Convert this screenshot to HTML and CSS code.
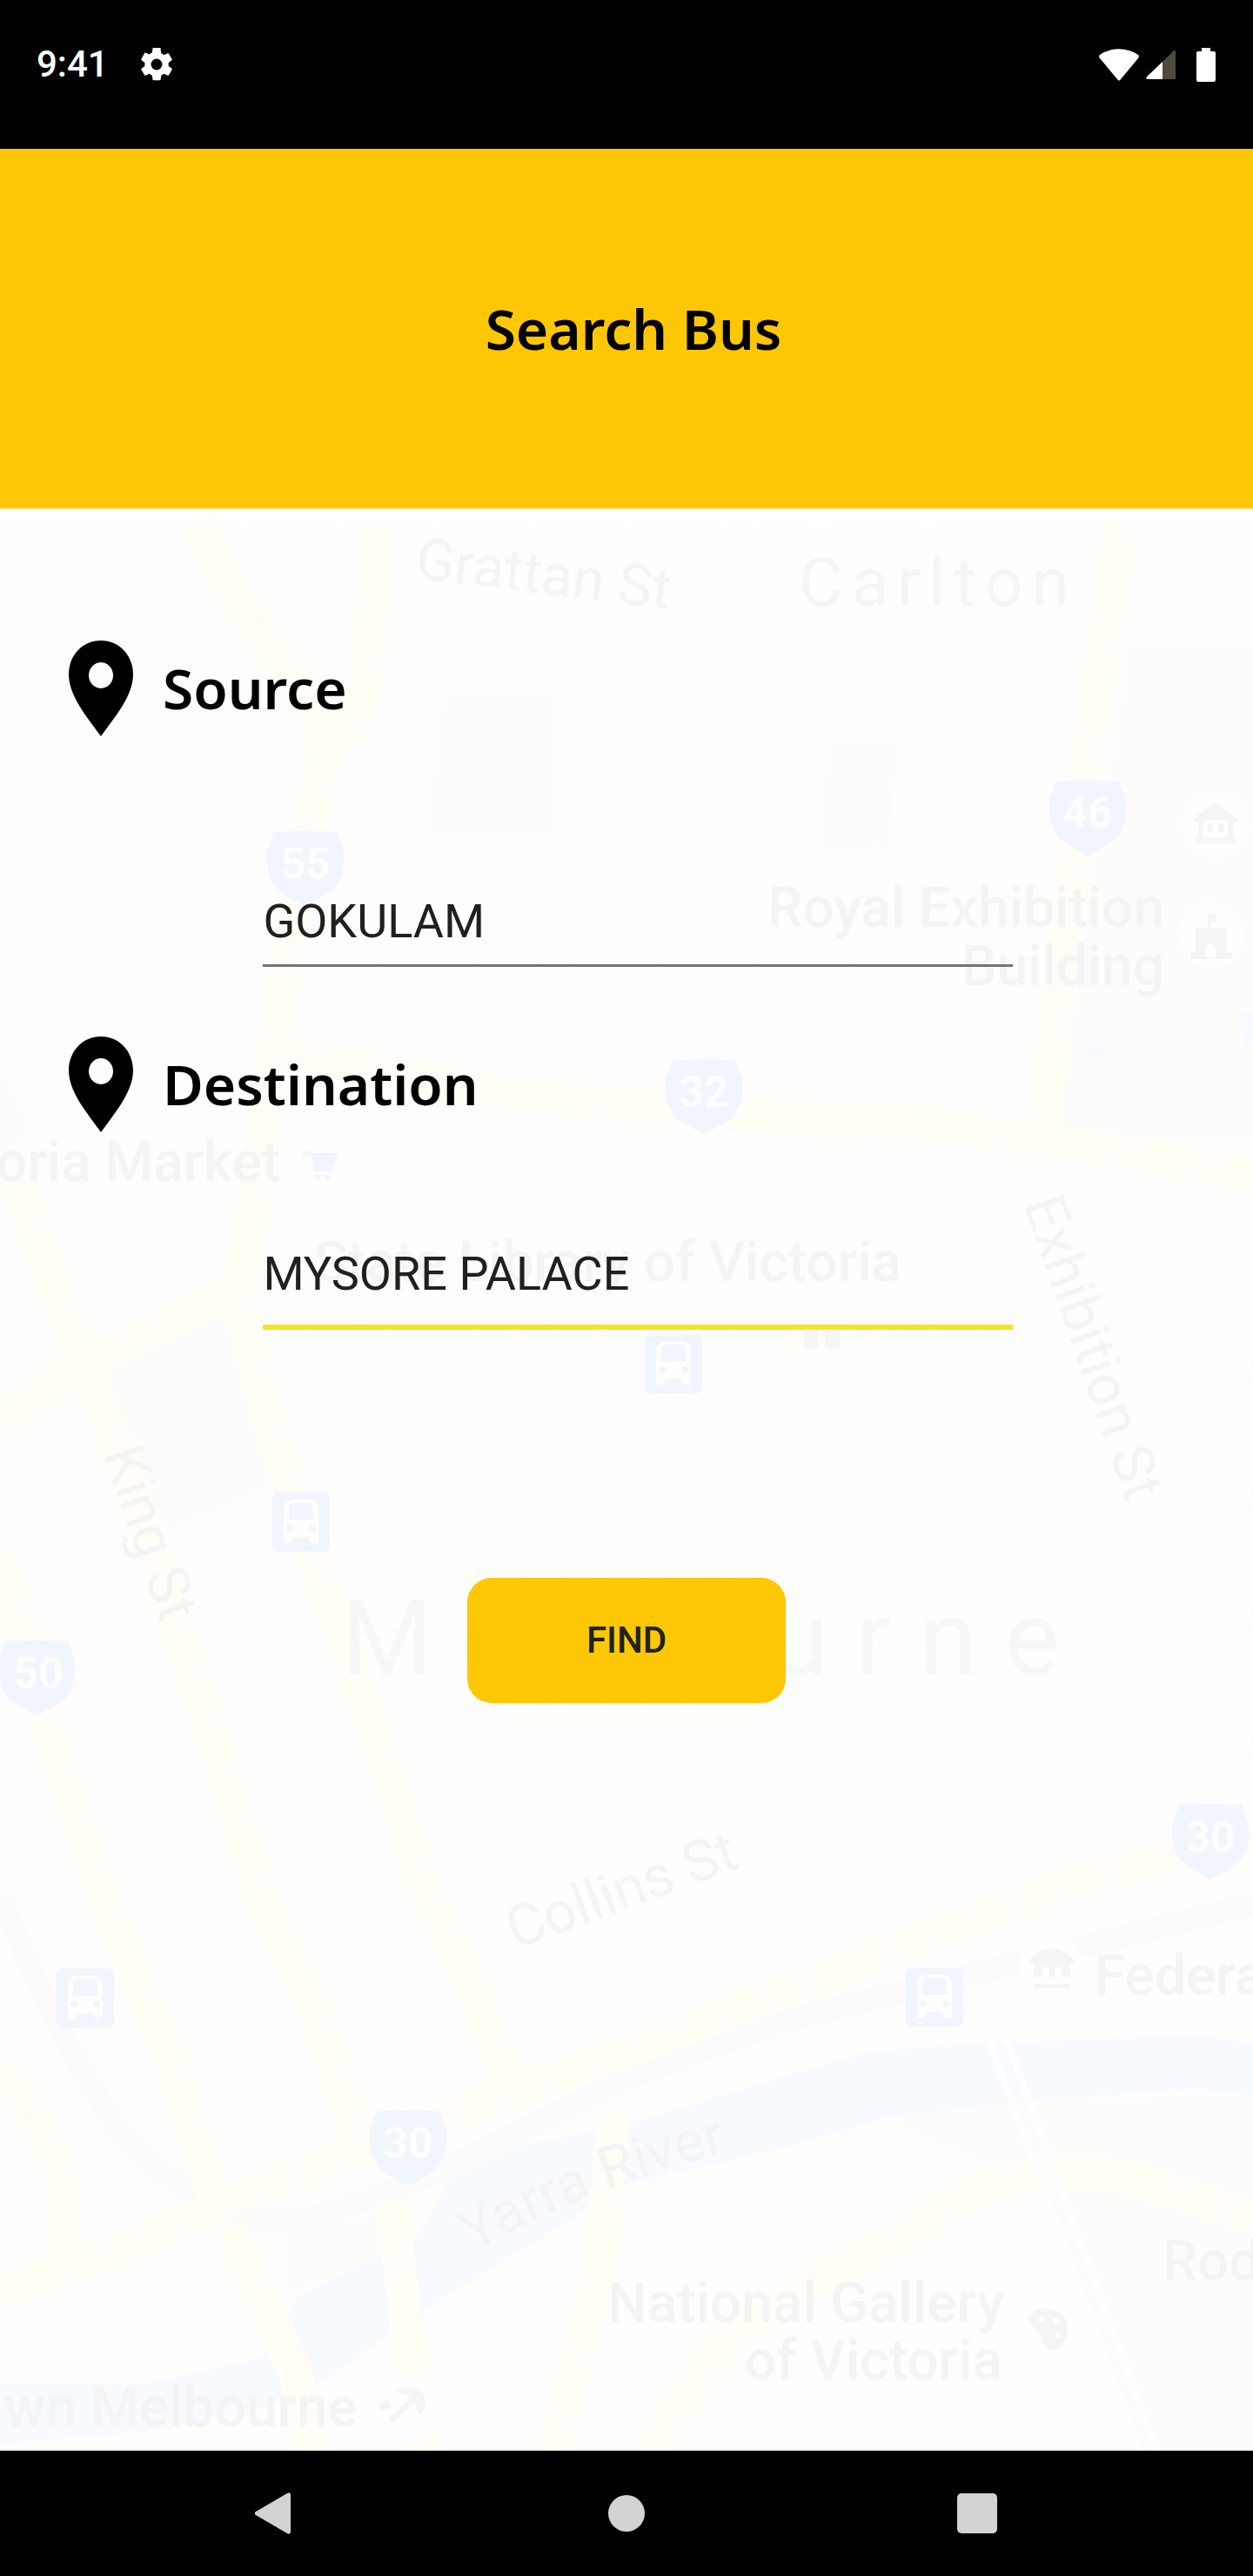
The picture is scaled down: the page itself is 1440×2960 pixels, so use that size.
FILE: index.html
```html
<!DOCTYPE html>
<html lang="en">
<head>
<meta charset="utf-8">
<meta name="viewport" content="width=device-width, initial-scale=1">
<title>Search Bus</title>
<link rel="stylesheet" href="styles.css">
</head>
<body>
<div class="status-bar">
  <div class="status-group">
    <span class="clock">9:41</span>
    <svg class="gear" viewBox="2 2 20 20" aria-hidden="true"><path fill="#fff" d="M19.14 12.94c.04-.3.06-.61.06-.94s-.02-.64-.07-.94l2.03-1.58a.49.49 0 0 0 .12-.61l-1.92-3.32a.49.49 0 0 0-.59-.22l-2.39.96a7 7 0 0 0-1.62-.94l-.36-2.54A.48.48 0 0 0 13.92 2h-3.84a.48.48 0 0 0-.47.41l-.36 2.54c-.59.24-1.13.57-1.62.94l-2.39-.96a.48.48 0 0 0-.59.22L2.74 8.87a.48.48 0 0 0 .12.61l2.03 1.58a6.4 6.4 0 0 0 0 1.88l-2.03 1.58a.49.49 0 0 0-.12.61l1.92 3.32c.12.22.37.29.59.22l2.39-.96c.5.38 1.03.7 1.62.94l.36 2.54c.05.24.24.41.48.41h3.84c.24 0 .44-.17.47-.41l.36-2.54a7 7 0 0 0 1.62-.94l2.39.96c.22.08.47 0 .59-.22l1.92-3.32a.48.48 0 0 0-.12-.61zM12 15.4a3.4 3.4 0 1 1 0-6.8 3.4 3.4 0 0 1 0 6.8z"/></svg>
  </div>
  <div class="status-group status-right">
    <svg class="wifi" viewBox="0 0 46 37" aria-hidden="true"><path fill="#fff" d="M1 7C14-2 32-2 45 7q2 1 0 4L25 35q-2 3-4 0L1 11q-2-3 0-4z"/></svg>
    <svg class="signal" viewBox="0 0 34 34" aria-hidden="true"><path fill="#504a3e" d="M19 14 32 1q2-1 2 1v32H19z"/><path fill="#fff" d="M19 14v20H2q-3 0-1-3z"/></svg>
    <svg class="battery" viewBox="0 0 22 39" aria-hidden="true"><path fill="#fff" d="M6 0h10v4h4q2 0 2 2v31q0 2-2 2H2q-2 0-2-2V6q0-2 2-2h4z"/></svg>
  </div>
</div>
<header class="app-header"><h1>Search Bus</h1></header>
<main class="screen">
  <svg class="map" viewBox="0 588 1440 2230" preserveAspectRatio="xMidYMid slice" aria-hidden="true">
    <defs>
      <pattern id="grid-a" width="110" height="150" patternUnits="userSpaceOnUse" patternTransform="rotate(8)"><path class="street" d="M0 20H110M30 0V150M80 20V90H110"/></pattern>
      <pattern id="grid-b" width="92" height="136" patternUnits="userSpaceOnUse" patternTransform="rotate(-19)"><path class="street" d="M0 12H92M16 0V136M60 12V76H92"/></pattern>
      <path id="river-line" d="M544 2590Q690 2506 890 2462"/>
      <path id="shield" d="M-36-42Q0-44 36-42L44-20Q46 12 30 26L0 44-30 26Q-46 12-44-20z"/>
      <g id="bus"><rect class="blue" x="-33" y="-34" width="66" height="68" rx="7"/><path class="halo" d="M-20 24V-14q0-12 12-12H8q12 0 12 12V24H11l-2-7H-9l-2 7z"/><path class="blue" d="M-14-17q0-5 5-5H9q5 0 5 5V-3h-28z"/><circle class="blue" cx="-13" cy="7" r="4"/><circle class="blue" cx="13" cy="7" r="4"/></g>
    </defs>
    <rect class="white" y="586" width="1440" height="20"/>
    <rect class="land" y="605" width="1440" height="2215"/>
    <path fill="url(#grid-a)" d="M0 605H1440V1330L720 1280 0 1180z"/>
    <path fill="url(#grid-b)" d="M0 1180 720 1280 1440 1330V2180L720 2360 200 2540 0 2400z"/>
    <path class="park" d="M510 800H640V960H490zM950 850H1030V975H945zM1300 740H1440V1310H1210zM95 1540 270 1480 310 1710 190 1760 130 1610zM0 1230 35 1300 0 1330zM330 2570 450 2545 460 2580 330 2640zM1020 2436 1190 2415 1440 2410V2820H1310L1200 2520z"/>
    <path class="water" d="M0 2740H170L300 2712 340 2642 430 2595 480 2570 520 2500 590 2470 720 2443 1000 2359 1100 2352 1380 2340 1440 2350V2410L1370 2402 1190 2415 1020 2435 900 2470 720 2512 480 2662 340 2760 180 2795 0 2810z"/>
    <path class="water" d="M1252 1198 1280 1212 1272 1226 1250 1212zM1425 1165H1440V1205H1430zM1364 1143H1376V1154H1364z"/>
    <path class="rail" d="M0 2180Q60 2330 130 2440 230 2560 340 2555 440 2530 560 2470L720 2390 900 2325 1440 2190"/>
    <g class="street wide">
      <path d="M720 680 1260 755M1070 605 990 1290M870 605 800 1200M250 640 440 665M230 680 110 810M0 980 700 1130M20 1960 100 2080 720 1850 1440 1440M500 1000 640 1400 800 1850M990 1290 1150 1760 1300 2140"/>
    </g>
    <g class="road">
      <path d="M225 605Q290 730 355 800L375 870 350 970M432 605 425 760 405 840 370 850M350 960 320 1160 285 1430 275 1500 310 1640 350 1760 440 2020 480 2150 540 2280 590 2400"/>
      <path d="M20 1360 70 1500 140 1680 245 2000 310 2210 360 2310 420 2490M0 1790 40 1940 130 2210 200 2380 250 2540M0 1635 90 1570 270 1485"/>
      <path d="M1288 605 1245 900 1200 1290M320 1210 560 1255 720 1272 1080 1295 1290 1325 1440 1355"/>
      <path d="M1440 2110 1230 2165 1080 2222 720 2360 520 2430 270 2530 80 2610 0 2635M0 2380 40 2430 75 2500V2600M265 2560 340 2730 360 2820M450 2530 485 2820M705 2430 690 2600 635 2820"/>
      <path d="M745 2820 840 2680 1130 2515Q1230 2480 1330 2515L1440 2550"/>
    </g>
    <g class="street bridge"><path d="M1120 2300 1310 2820M1140 2300 1330 2820"/></g>
    <g class="blue">
      <use href="#shield" x="351" y="1000"/><use href="#shield" x="1250" y="942"/><use href="#shield" x="809" y="1262"/><use href="#shield" x="42" y="1930"/><use href="#shield" x="1391" y="2118"/><use href="#shield" x="469" y="2470"/>
    </g>
    <g class="route">
      <text x="351" y="1012">55</text><text x="1250" y="953">46</text><text x="809" y="1274">32</text><text x="44" y="1942">50</text><text x="1391" y="2130">30</text><text x="469" y="2482">30</text>
    </g>
    <use href="#bus" x="346" y="1751"/><use href="#bus" x="774" y="1569"/><use href="#bus" x="98" y="2298"/><use href="#bus" x="1074" y="2297"/>
    <g class="halo"><circle cx="368" cy="1338" r="38"/><circle cx="1397" cy="950" r="38"/><circle cx="1392" cy="1077" r="38"/><circle cx="944" cy="1537" r="38"/><circle cx="1209" cy="2265" r="38"/><circle cx="1203" cy="2677" r="40"/><circle cx="462" cy="2767" r="40"/></g>
    <path class="blue" d="M348 1324H355L359 1327H388L382 1348H361L358 1332 348 1330zM362 1352H380V1358H374V1354H368V1358H362z"/>
    <g class="poi">
      <path fill-rule="evenodd" d="M1372 942 1397 924 1421 942V946H1417V964H1421V971H1373V964H1377V946H1372zM1383 944V964H1411V944zM1388 948H1394V958H1388zM1400 948H1406V958H1400z"/>
      <path fill-rule="evenodd" d="M1388 1051H1398V1062H1392V1068H1410V1096H1416V1104H1368V1096H1374V1068H1388zM1385 1102V1092Q1391 1080 1398 1092V1102z"/>
      <path d="M924 1529H940V1552H926Q924 1552 924 1548zM948 1529H965V1548Q965 1552 962 1552H948z"/>
      <path d="M1183 2254Q1209 2228 1234 2254V2258H1230V2274H1220V2262H1212V2274H1206V2262H1198V2274H1188V2258H1183zM1188 2282H1230V2287H1188z"/>
      <path fill-rule="evenodd" d="M1180 2667Q1188 2651 1208 2655 1229 2663 1227 2679 1225 2700 1209 2703 1199 2701 1198 2688 1190 2677 1180 2667zM1194 2664h7v6h-7zM1210 2666h7v6h-7zM1213 2682h6v6h-6z"/>
      <path d="M436 2761H448V2771H436zM454 2749Q472 2738 486 2752 494 2768 482 2776L476 2762 452 2787 446 2782 472 2756z"/>
    </g>
    <g class="place">
      <text x="1338" y="1067" text-anchor="end">Royal Exhibition</text>
      <text x="1338" y="1134" text-anchor="end">Building</text>
      <text x="322" y="1359" text-anchor="end">oria Market</text>
      <text x="1036" y="1474" text-anchor="end">State Library of Victoria</text>
      <text x="1258" y="2294">Federa</text>
      <text x="1154" y="2670" text-anchor="end">National Gallery</text>
      <text x="1152" y="2736" text-anchor="end">of Victoria</text>
      <text x="1336" y="2622">Rod</text>
      <text x="411" y="2790" text-anchor="end">wn Melbourne</text>
    </g>
    <g class="street-name">
      <text transform="translate(476 666) rotate(7)">Grattan St</text>
      <text transform="translate(1176 1385) rotate(71)">Exhibition St</text>
      <text transform="translate(118 1672) rotate(71)">King St</text>
      <text transform="translate(592 2242) rotate(-20)">Collins St</text>
      <text><textPath href="#river-line">Yarra River</textPath></text>
    </g>
    <text class="suburb" x="918" y="698">Carlton</text>
    <text class="city" x="392" y="1926">Melbourne</text>
  </svg>
  <form class="search-form">
    <div class="field">
      <label for="source"><svg class="pin" viewBox="0 0 74 110" aria-hidden="true"><path fill-rule="evenodd" d="M37 0C16 0 0 17 0 39c0 25 22 50 37 71 15-21 37-46 37-71C74 17 58 0 37 0zm0 25a14 15 0 1 1 0 30 14 15 0 0 1 0-30z"/></svg><span>Source</span></label>
      <input id="source" type="text" value="GOKULAM">
    </div>
    <div class="field field-active">
      <label for="destination"><svg class="pin" viewBox="0 0 74 110" aria-hidden="true"><path fill-rule="evenodd" d="M37 0C16 0 0 17 0 39c0 25 22 50 37 71 15-21 37-46 37-71C74 17 58 0 37 0zm0 25a14 15 0 1 1 0 30 14 15 0 0 1 0-30z"/></svg><span>Destination</span></label>
      <input id="destination" type="text" value="MYSORE PALACE">
    </div>
    <button class="find" type="submit">FIND</button>
  </form>
</main>
<nav class="nav-bar" aria-label="System">
  <button type="button" aria-label="Back"><svg viewBox="0 0 48 48"><path d="M1 22 37 1q4-2 4 2v42q0 4-4 2L1 26q-3-2 0-4z"/></svg></button>
  <button type="button" aria-label="Home"><svg viewBox="0 0 48 48"><circle cx="24" cy="24" r="21"/></svg></button>
  <button type="button" aria-label="Overview"><svg viewBox="0 0 48 48"><rect x="1" y="1" width="46" height="46" rx="5"/></svg></button>
</nav>
</body>
</html>
```
FILE: styles.css
```css
* { box-sizing: border-box; }
body {
  margin: 0;
  min-height: 100vh;
  display: flex;
  flex-direction: column;
  background: #fefefd;
  color: #21201c;
  font-family: Roboto, "Liberation Sans", sans-serif;
}
svg { display: block; }

.status-bar {
  display: flex;
  justify-content: space-between;
  align-items: flex-start;
  height: 171px;
  padding: 48px 43px 0 42px;
  background: #000;
  color: #fff;
}
.status-group { display: flex; align-items: center; height: 52px; gap: 36px; }
.status-right { gap: 8px; }
.clock { font-size: 42px; line-height: 56px; font-weight: 500; }
.gear { width: 38px; height: 38px; }
.wifi { width: 46px; height: 37px; }
.signal { width: 34px; height: 34px; }
.battery { width: 22px; height: 39px; margin-left: 16px; }

.app-header {
  display: flex;
  align-items: center;
  justify-content: center;
  height: 415px;
  padding-left: 16px;
  border-bottom: 2px solid #ffedb0;
  background: #fdc706;
}
h1 {
  margin: 0;
  color: #000;
  font: 600 64px/80px "Noto Sans", "Open Sans", sans-serif;
}

.screen { position: relative; flex: 1; overflow: hidden; }
.map { position: absolute; inset: 0; width: 100%; height: 100%; }
.search-form { position: relative; padding-top: 150px; }
.field { display: flex; flex-direction: column; gap: 155px; margin-bottom: 80px; }
.field-active { gap: 117px; margin-bottom: 285px; }
.field label {
  display: flex;
  align-items: center;
  gap: 34px;
  height: 110px;
  padding-left: 79px;
  color: #000;
  font: 600 64px/80px "Noto Sans", "Open Sans", sans-serif;
}
.pin { width: 74px; height: 110px; }
.field input {
  height: 110px;
  margin: 0 19.2% 0 21%;
  padding: 8px 0 0;
  border: 0;
  border-bottom: 3px solid #737373;
  border-radius: 0;
  outline: 0;
  background: transparent;
  color: inherit;
  font: 400 54px/64px Roboto, "Liberation Sans", sans-serif;
}
.field-active input { padding: 0 0 14px; border-bottom: 6px solid #f7e324; }
.find {
  display: block;
  width: 366px;
  height: 144px;
  margin: 0 auto;
  padding: 0;
  border: 0;
  border-radius: 28px;
  background: #fdc706;
  color: #21201c;
  font: 500 42px/48px Roboto, "Liberation Sans", sans-serif;
}

.nav-bar {
  display: grid;
  grid-template-columns: repeat(3, 1fr);
  height: 144px;
  padding: 0 8%;
  background: #000;
}
.nav-bar button {
  display: flex;
  align-items: center;
  justify-content: center;
  padding: 0;
  border: 0;
  background: none;
}
.nav-bar svg { width: 48px; height: 48px; fill: #d3d3d1; }

.white { fill: #fff; }
.land { fill: #fdfdfc; }
.park { fill: #fcfdfa; }
.water { fill: #f7faff; }
.blue { fill: #f0f5fe; }
.halo { fill: #fefefe; }
.poi { fill: #f5f5f6; }
.rail { fill: none; stroke: #fbfbfb; stroke-width: 26px; }
.street { fill: none; stroke: #fefefd; stroke-width: 6px; }
.wide { stroke: #fefefe; stroke-width: 14px; }
.bridge { stroke: #fefefe; stroke-width: 8px; }
.road { fill: none; stroke: #fffdf5; stroke-width: 38px; stroke-linejoin: round; }
.map text { font-family: Roboto, "Liberation Sans", sans-serif; }
.route text { fill: #fdfeff; font-size: 50px; font-weight: 700; text-anchor: middle; }
.place text { fill: #f4f4f5; font-size: 64px; font-weight: 500; }
.street-name text { fill: #f4f4f5; font-size: 66px; }
.map .suburb { fill: #f5f5f6; font-size: 78px; letter-spacing: 10px; }
.map .city { fill: #f7f7f8; font-size: 120px; letter-spacing: 32px; }
```
